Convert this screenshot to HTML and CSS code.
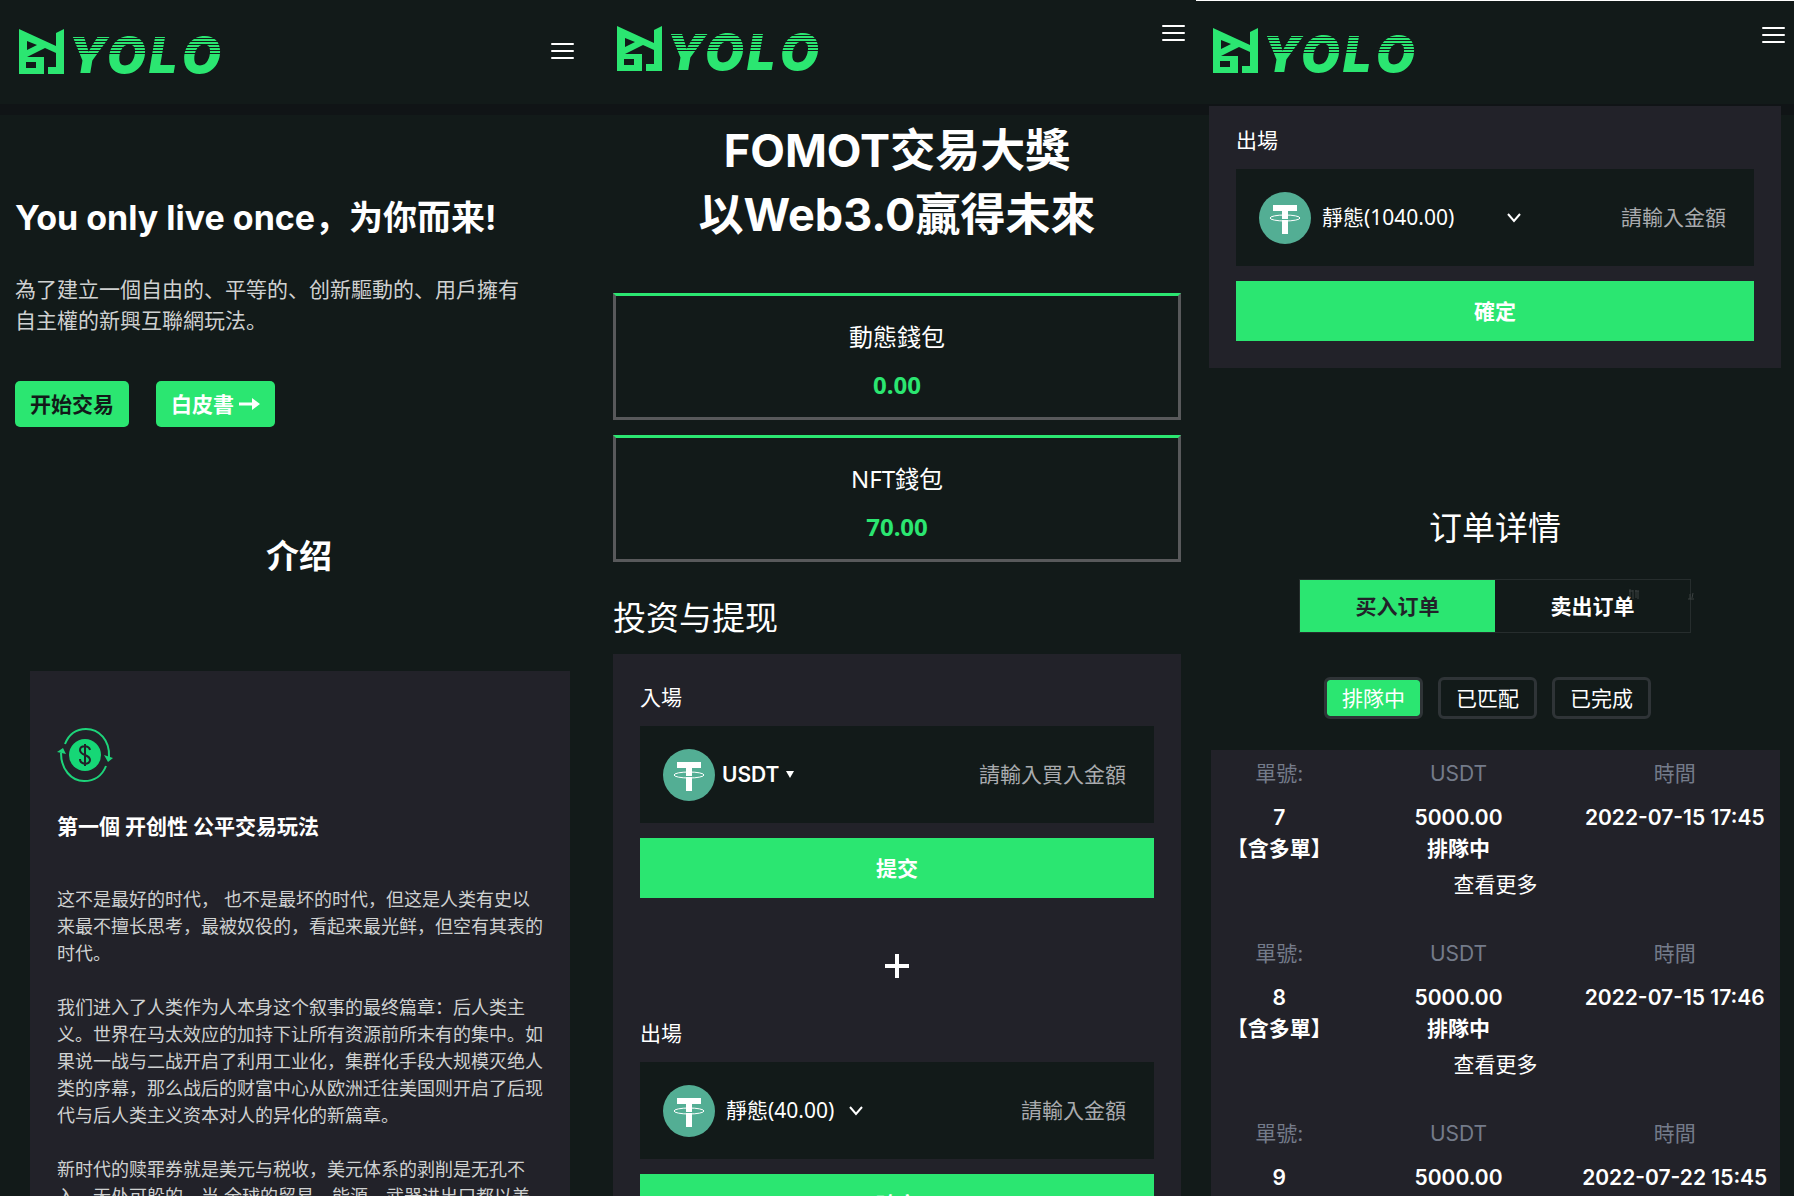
FILE: index.html
```
<!DOCTYPE html>
<html lang="zh">
<head>
    <meta charset="UTF-8">
    <meta name="viewport" content="width=device-width, initial-scale=1.0">
    <title>YOLO</title>
    <link rel="stylesheet" href="styles.css">
</head>
<body>
    <!-- shared drawings -->
    <svg class="sprite" width="0" height="0" aria-hidden="true">
        <symbol id="logo" viewBox="0 0 202 46" overflow="visible">
            <path fill="#2be671" fill-rule="evenodd" d="M0 0 L37 17 V4 L45 0 V45 H29 V38 H37 V24 L26 19 L8 28 H25 V45 H0 Z M8 12 V21 L18 16 Z M7 33 V39 H17 V33 Z"/>
            <text class="logo-text" x="49 88 130 163" y="44">YOLO</text>
            <g fill="#121a19">
                <rect x="50" y="9" width="152" height="1"/>
                <rect x="50" y="12" width="152" height="1"/>
                <rect x="50" y="15" width="152" height="1"/>
                <rect x="50" y="18" width="152" height="1"/>
                <rect x="50" y="21" width="152" height="1"/>
                <rect x="50" y="24" width="152" height="1"/>
            </g>
        </symbol>
        <symbol id="menu" viewBox="0 0 23 18">
            <path stroke="#fff" stroke-width="2" stroke-linecap="round" d="M1 2H22M1 9H22M1 16H22"/>
        </symbol>
        <symbol id="coin" viewBox="0 0 52 52">
            <circle cx="26" cy="26" r="26" fill="#53ae94"/>
            <path fill="#fff" d="M14 13H38V19H29V42H23V19H14Z"/>
            <ellipse cx="26" cy="26" rx="15" ry="3" fill="none" stroke="#fff" stroke-width="1"/>
            <path fill="#53ae94" d="M23 27h6v1h-6z"/>
        </symbol>
        <symbol id="chevron" viewBox="0 0 14 10">
            <path fill="none" stroke="#fff" stroke-width="2" d="M1 1L7 8L13 1"/>
        </symbol>
    </svg>

    <main class="screens">
        <!-- home -->
        <section class="screen">
            <header class="header header-home">
                <svg class="logo" role="img" aria-label="YOLO"><use href="#logo"/></svg>
                <button class="menu" aria-label="menu"><svg><use href="#menu"/></svg></button>
            </header>
            <div class="hero">
                <h1>You only live once，为你而来!</h1>
                <p>為了建立一個自由的、平等的、创新驅動的、用戶擁有自主權的新興互聯網玩法。</p>
                <div class="hero-buttons">
                    <button class="btn btn-dark">开始交易</button>
                    <button class="btn">白皮書
                        <svg width="21" height="14" viewBox="0 0 21 14"><path fill="#fff" d="M0 5.500H13V1L21 7L13 13V8.500H0Z"/></svg>
                    </button>
                </div>
            </div>
            <h2 class="intro-title">介绍</h2>
            <article class="intro">
                <svg class="intro-icon" width="57" height="54" viewBox="0 0 57 54">
                    <g fill="none" stroke="#1dd47a" stroke-width="2">
                        <path d="M8 16C12 6 20 1 29 1C42 1 53 12 52 29"/>
                        <path d="M49 38C45 48 37 53 27 53C14 53 4 41 4 25"/>
                    </g>
                    <path fill="#1dd47a" d="M0 24L6 20L9 26ZM47 27L56 30L51 34Z"/>
                    <ellipse cx="28" cy="27" rx="16" ry="16" fill="#16d776"/>
                    <path fill="none" stroke="#222229" stroke-width="2" d="M28 16V38M33 22C32 17 23 17 23 22C23 28 33 26 33 32C33 37 23 37 23 31"/>
                </svg>
                <h3>第一個 开创性 公平交易玩法</h3>
                <p>这不是最好的时代， 也不是最坏的时代，但这是人类有史以来最不擅长思考，最被奴役的，看起来最光鲜，但空有其表的时代。</p>
                <p>我们进入了人类作为人本身这个叙事的最终篇章：后人类主义。世界在马太效应的加持下让所有资源前所未有的集中。如果说一战与二战开启了利用工业化，集群化手段大规模灭绝人类的序幕，那么战后的财富中心从欧洲迁往美国则开启了后现代与后人类主义资本对人的异化的新篇章。</p>
                <p>新时代的赎罪券就是美元与税收，美元体系的剥削是无孔不入、无处可躲的。当 全球的贸易，能源，武器进出口都以美</p>
            </article>
        </section>

        <!-- wallet -->
        <section class="screen">
            <header class="header">
                <svg class="logo" role="img" aria-label="YOLO"><use href="#logo"/></svg>
                <button class="menu" aria-label="menu"><svg><use href="#menu"/></svg></button>
            </header>
            <div class="wallet-page" lang="zh-Hant">
                <h1 class="prize">FOMOT交易大獎<br>以Web3.0贏得未來</h1>
                <div class="wallet">
                    <span>動態錢包</span>
                    <strong>0.00</strong>
                </div>
                <div class="wallet">
                    <span>NFT錢包</span>
                    <strong>70.00</strong>
                </div>
                <h2 class="section-title" lang="zh">投资与提现</h2>
                <form class="panel">
                    <label for="buy">入場</label>
                    <div class="field">
                        <svg class="coin"><use href="#coin"/></svg>
                        <select class="token" aria-label="token"><option>USDT</option></select>
                        <svg class="caret" width="8" height="7" viewBox="0 0 8 7"><path fill="#fff" d="M0 0H8L4 7Z"/></svg>
                        <input id="buy" type="text" placeholder="請輸入買入金額">
                    </div>
                    <button class="submit" type="button">提交</button>
                    <div class="plus"><svg width="24" height="24" viewBox="0 0 24 24"><path stroke="#fff" stroke-width="4" d="M12 0V24M0 12H24"/></svg></div>
                    <label for="sell">出場</label>
                    <div class="field">
                        <svg class="coin"><use href="#coin"/></svg>
                        <select aria-label="wallet"><option>靜態(40.00)</option></select>
                        <svg class="chevron"><use href="#chevron"/></svg>
                        <input id="sell" type="text" placeholder="請輸入金額">
                    </div>
                    <button class="submit" type="button">確定</button>
                </form>
            </div>
        </section>

        <!-- orders -->
        <section class="screen screen-orders" lang="zh-Hant">
            <header class="header">
                <svg class="logo" role="img" aria-label="YOLO"><use href="#logo"/></svg>
                <button class="menu" aria-label="menu"><svg><use href="#menu"/></svg></button>
            </header>
            <form class="panel panel-exit">
                <label for="exit">出場</label>
                <div class="field">
                    <svg class="coin"><use href="#coin"/></svg>
                    <select class="wide" aria-label="wallet"><option>靜態(1040.00)</option></select>
                    <svg class="chevron"><use href="#chevron"/></svg>
                    <input id="exit" type="text" placeholder="請輸入金額">
                </div>
                <button class="submit" type="button">確定</button>
            </form>
            <h2 class="orders-title" lang="zh">订单详情</h2>
            <div class="tabs" lang="zh">
                <button class="tab active">买入订单</button>
                <button class="tab">卖出订单</button>
                <svg class="tab-marks" width="66" height="12" viewBox="0 0 66 12"><path fill="none" stroke="#3b4141" d="M0 2h4M1 0v9M4 1v9M6 2h4M7 1v8M9 2v8M59 10h6M61 5v5M64 4l-1 5"/></svg>
            </div>
            <div class="filters">
                <button class="filter active">排隊中</button>
                <button class="filter">已匹配</button>
                <button class="filter">已完成</button>
            </div>
            <div class="orders">
                <div class="order">
                    <table>
                        <tr><th>單號:</th><th>USDT</th><th>時間</th></tr>
                        <tr><td>7<br>【含多單】</td><td>5000.00<br>排隊中</td><td>2022-07-15 17:45</td></tr>
                    </table>
                    <a href="#">查看更多</a>
                </div>
                <div class="order">
                    <table>
                        <tr><th>單號:</th><th>USDT</th><th>時間</th></tr>
                        <tr><td>8<br>【含多單】</td><td>5000.00<br>排隊中</td><td>2022-07-15 17:46</td></tr>
                    </table>
                    <a href="#">查看更多</a>
                </div>
                <div class="order">
                    <table>
                        <tr><th>單號:</th><th>USDT</th><th>時間</th></tr>
                        <tr><td>9<br>【含多單】</td><td>5000.00<br>排隊中</td><td>2022-07-22 15:45</td></tr>
                    </table>
                    <a href="#">查看更多</a>
                </div>
            </div>
        </section>
    </main>
</body>
</html>
```
FILE: styles.css
```
* {
    box-sizing: border-box;
}
body {
    margin: 0;
    background-color: #121a19;
    color: #fff;
    font-family: Inter, 'Noto Sans CJK SC', sans-serif;
    font-size: 21px;
    line-height: 31px;
}
[lang="zh-Hant"] {
    font-family: Inter, 'Noto Sans CJK TC', sans-serif;
}
[lang="zh"] {
    font-family: Inter, 'Noto Sans CJK SC', sans-serif;
}
h1, h2, h3, p {
    margin: 0;
}
button, input, select {
    font: inherit;
    color: inherit;
    background: none;
    border: none;
    padding: 0;
    margin: 0;
}
button {
    cursor: pointer;
}
.sprite {
    position: absolute;
}
.screens {
    display: grid;
    grid-template-columns: repeat(3, minmax(0, 1fr));
    height: 100vh;
    overflow: hidden;
}

/* header */
.header {
    display: flex;
    justify-content: space-between;
    align-items: flex-start;
    height: 115px;
    padding: 24px 11px 0 19px;
    border-bottom: 11px solid #101416;
}
.header-home {
    align-items: center;
    padding: 0 24px 2px 19px;
}
.screen-orders .header {
    border-top: 1px solid #fff;
    padding: 25px 9px 0 17px;
}
.logo {
    width: 202px;
    height: 46px;
    margin-top: 2px;
    overflow: visible;
}
.logo-text {
    font-family: Inter, sans-serif;
    font-size: 50px;
    font-weight: 900;
    font-style: italic;
    line-height: 1;
    fill: #2be671;
}
.menu {
    display: flex;
}
.menu svg {
    width: 23px;
    height: 18px;
}

/* home */
.hero {
    padding: 79px 60px 0 15px;
}
.hero h1 {
    font-size: 34px;
    line-height: 48px;
}
.hero p {
    margin-top: 32px;
    color: #cfd1d1;
}
.hero-buttons {
    display: flex;
    gap: 27px;
    margin-top: 45px;
}
.btn {
    display: flex;
    align-items: center;
    gap: 5px;
    height: 46px;
    padding: 0 15px;
    border-radius: 5px;
    background-color: #2be671;
    font-weight: bold;
}
.btn-dark {
    color: #121a19;
}
.intro-title {
    margin-top: 105px;
    font-size: 33px;
    line-height: 48px;
    text-align: center;
}
.intro {
    margin: 91px 28px 0 30px;
    padding: 57px 27px 0;
    background-color: #222229;
    font-size: 18px;
    line-height: 27px;
    color: #cfd1d1;
}
.intro-icon {
    display: block;
}
.intro h3 {
    margin: 29px 0 44px;
    font-size: 21px;
    line-height: 31px;
    color: #fff;
}
.intro p {
    margin-bottom: 27px;
}

/* wallet */
.wallet-page {
    padding: 0 15px;
}
.prize {
    margin-top: 4px;
    margin-bottom: 46px;
    font-size: 45px;
    line-height: 64px;
    text-align: center;
}
.wallet {
    display: flex;
    flex-direction: column;
    align-items: center;
    gap: 12px;
    height: 127px;
    margin-bottom: 15px;
    padding-top: 23px;
    border: 3px solid #58595b;
    border-top-color: #2be671;
    font-family: 'Noto Sans', 'Noto Sans CJK TC', sans-serif;
    font-size: 24px;
    line-height: 36px;
}
.wallet strong {
    color: #2be671;
}
.section-title {
    margin: 32px 0 12px;
    font-size: 33px;
    font-weight: normal;
    line-height: 48px;
}
.panel {
    padding: 28px 27px 27px;
    background-color: #222229;
}
.panel label {
    display: block;
    margin-bottom: 13px;
}
.field {
    display: flex;
    align-items: center;
    height: 97px;
    padding: 0 28px 0 23px;
    background-color: #121a19;
}
.coin {
    flex: none;
    width: 52px;
    height: 52px;
    margin-right: 11px;
}
.field select {
    appearance: none;
    font-family: 'Noto Sans', 'Noto Sans CJK TC', sans-serif;
}
.field .token {
    margin-left: -4px;
    font-family: Inter, sans-serif;
    font-weight: 600;
}
.field .wide {
    width: 185px;
}
.caret {
    flex: none;
    margin-left: 6px;
}
.chevron {
    flex: none;
    width: 14px;
    height: 10px;
    margin-left: 14px;
}
.wide + .chevron {
    margin-left: 0;
}
.field input {
    flex: 1;
    min-width: 0;
    text-align: right;
}
.field input::placeholder {
    color: #a9abae;
    opacity: 1;
}
.submit {
    display: block;
    width: 100%;
    height: 60px;
    margin-top: 15px;
    background-color: #2be671;
    font-weight: bold;
}
.plus {
    display: flex;
    justify-content: center;
    padding: 56px 0 40px;
}

/* orders */
.panel-exit {
    margin: -9px 13px 0;
    padding-top: 19px;
}
.orders-title {
    margin-top: 136px;
    font-size: 33px;
    font-weight: normal;
    line-height: 48px;
    text-align: center;
}
.tabs {
    display: flex;
    position: relative;
    width: 392px;
    margin: 27px auto 0;
    border: 1px solid #262d2d;
}
.tab {
    flex: 1;
    height: 52px;
    font-weight: bold;
}
.tab.active {
    background-color: #2be671;
    color: #222229;
}
.tab-marks {
    position: absolute;
    top: 9px;
    right: -5px;
}
.filters {
    display: flex;
    justify-content: center;
    margin: 44px 0 31px;
}
.filter {
    height: 42px;
    margin-right: 15px;
    padding: 0 15px;
    border: 3px solid #2f3437;
    border-radius: 6px;
}
.filter.active {
    background-color: #2be671;
    background-clip: padding-box;
}
.orders {
    margin: 0 14px 0 15px;
    background-color: #222229;
}
.order {
    height: 180px;
    padding-top: 8px;
    text-align: center;
}
.order table {
    width: 100%;
    table-layout: fixed;
    border-collapse: collapse;
}
.order th {
    padding: 0;
    font-weight: normal;
    color: #747b8a;
}
.order th:first-child {
    width: 24%;
}
.order th:last-child {
    width: 37%;
}
.order td {
    padding: 13px 0 5px;
    font-weight: 600;
    vertical-align: top;
    white-space: nowrap;
}
.order a {
    color: #fff;
    text-decoration: none;
}
```
